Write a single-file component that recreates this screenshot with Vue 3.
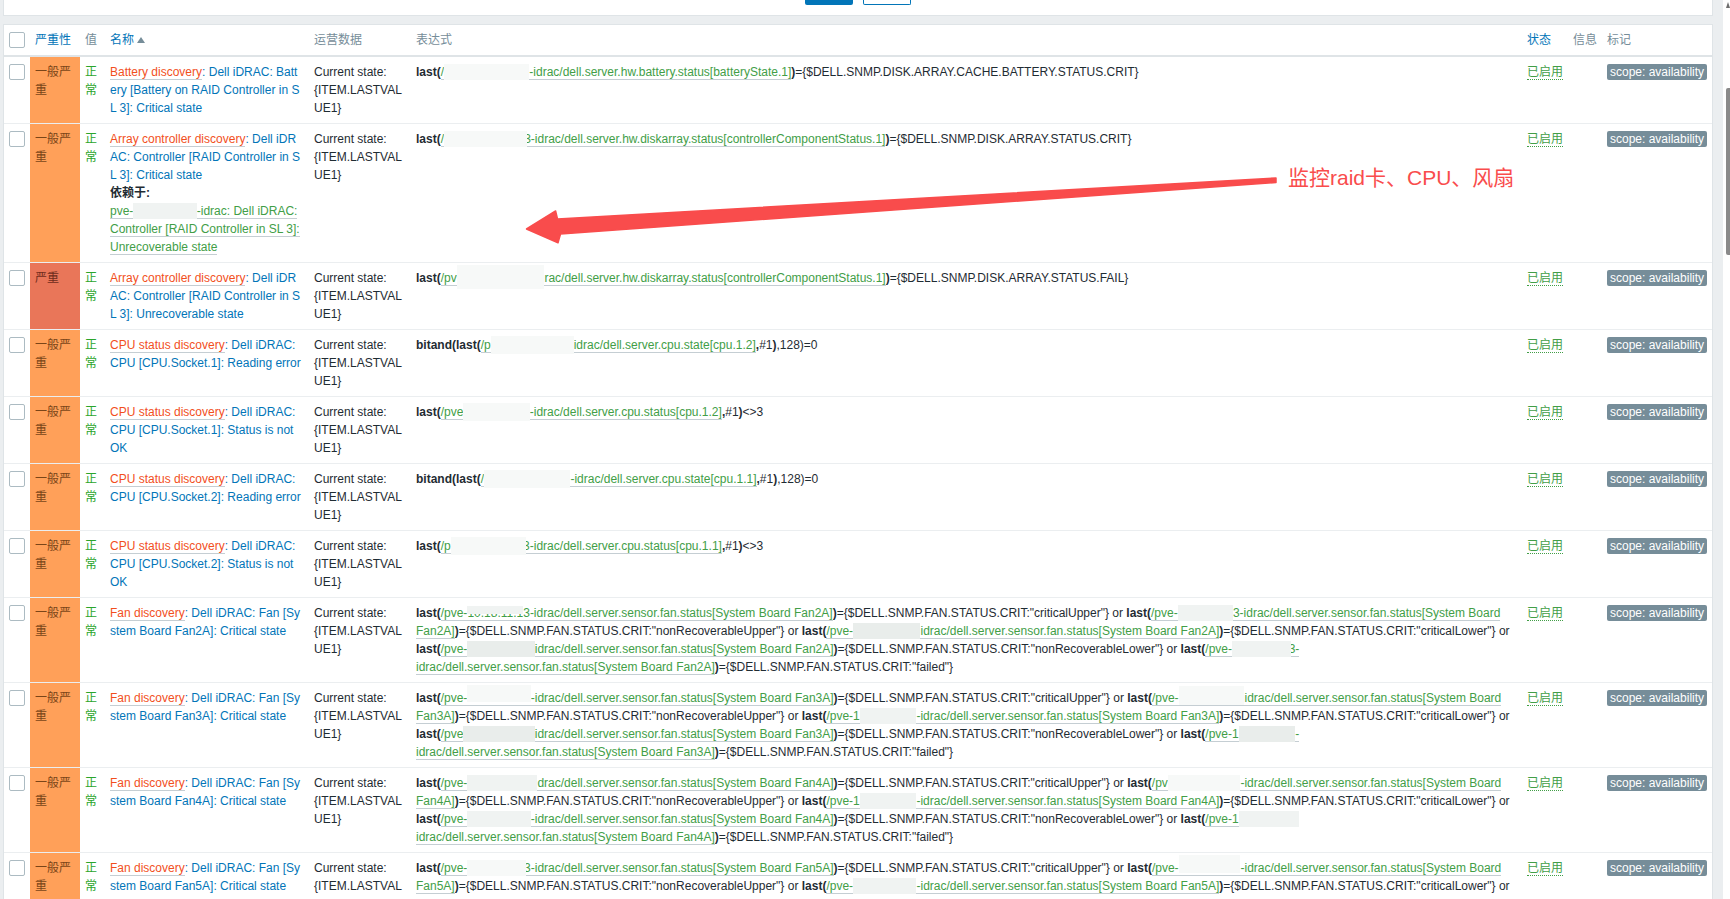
<script setup>
const LIGHT = '#f7f9f8'
const MID = '#f0f3f2'
const DARK = '#e9edeb'

const patch = (w, tone = MID, top = 1, h = 16, over = 0) => ({ w, tone, top, h, over })
const patchStyle = (p) => ({
  width: p.w + p.over + 'px',
  height: p.h + 'px',
  background: p.tone,
  marginTop: p.top + 'px',
  marginBottom: 18 - p.top - p.h + 'px',
  marginRight: -p.over + 'px'
})

const b = (t) => ({ k: 'b', t })
const t = (t) => ({ k: 't', t })
const link = (...parts) => ({ k: 'a', parts })

const simple = (open, host, key, tail) => [
  b(open),
  link(...host, key),
  ...tail
]

const ratioTail = (v) => [b(','), t('#1'), b(')'), t(v)]

const fanExpr = (n, hosts) => {
  const key = `/dell.server.sensor.fan.status[System Board Fan${n}A]`
  const crit = ['criticalUpper', 'nonRecoverableUpper', 'criticalLower', 'nonRecoverableLower', 'failed']
  const out = []
  hosts.forEach((h, i) => {
    out.push(b('last('), link(...h, key), b(')'), t(`={$DELL.SNMP.FAN.STATUS.CRIT:"${crit[i]}"}`))
    if (i < crit.length - 1) out.push(t(' or '))
  })
  return out
}

const fanName = (n) => ({
  lead: 'Fan discovery',
  rest: `: Dell iDRAC: Fan [System Board Fan${n}A]: Critical state`
})

const rows = [
  {
    sev: 'avg',
    lead: 'Battery discovery',
    rest: ': Dell iDRAC: Battery [Battery on RAID Controller in SL 3]: Critical state',
    expr: simple('last(', ['/', patch(85.3, LIGHT), '-idrac'], '/dell.server.hw.battery.status[batteryState.1]', [
      b(')'), t('={$DELL.SNMP.DISK.ARRAY.CACHE.BATTERY.STATUS.CRIT}')
    ])
  },
  {
    sev: 'avg',
    lead: 'Array controller discovery',
    rest: ': Dell iDRAC: Controller [RAID Controller in SL 3]: Critical state',
    dep: true,
    expr: simple('last(', ['/', patch(80.1, LIGHT, 1, 16, 2.4), '3-idrac'], '/dell.server.hw.diskarray.status[controllerComponentStatus.1]', [
      b(')'), t('={$DELL.SNMP.DISK.ARRAY.STATUS.CRIT}')
    ])
  },
  {
    sev: 'high',
    lead: 'Array controller discovery',
    rest: ': Dell iDRAC: Controller [RAID Controller in SL 3]: Unrecoverable state',
    expr: simple('last(', ['/pv', patch(87.7, LIGHT, -4, 24), 'rac'], '/dell.server.hw.diskarray.status[controllerComponentStatus.1]', [
      b(')'), t('={$DELL.SNMP.DISK.ARRAY.STATUS.FAIL}')
    ])
  },
  {
    sev: 'avg',
    lead: 'CPU status discovery',
    rest: ': Dell iDRAC: CPU [CPU.Socket.1]: Reading error',
    expr: simple('bitand(last(', ['/p', patch(83, LIGHT, 0, 18), 'idrac'], '/dell.server.cpu.state[cpu.1.2]', ratioTail(',128)=0'))
  },
  {
    sev: 'avg',
    lead: 'CPU status discovery',
    rest: ': Dell iDRAC: CPU [CPU.Socket.1]: Status is not OK',
    expr: simple('last(', ['/pve', patch(66.4, LIGHT, 0, 18), '-idrac'], '/dell.server.cpu.status[cpu.1.2]', [
      b(','), t('#1'), b(')'), t('<>3')
    ])
  },
  {
    sev: 'avg',
    lead: 'CPU status discovery',
    rest: ': Dell iDRAC: CPU [CPU.Socket.2]: Reading error',
    expr: simple('bitand(last(', ['/', patch(86.4, LIGHT, 0, 18), '-idrac'], '/dell.server.cpu.state[cpu.1.1]', ratioTail(',128)=0'))
  },
  {
    sev: 'avg',
    lead: 'CPU status discovery',
    rest: ': Dell iDRAC: CPU [CPU.Socket.2]: Status is not OK',
    expr: simple('last(', ['/p', patch(72.4, LIGHT, 0, 18, 2.4), '3-idrac'], '/dell.server.cpu.status[cpu.1.1]', [
      b(','), t('#1'), b(')'), t('<>3')
    ])
  },
  {
    sev: 'avg',
    ...fanName(2),
    expr: fanExpr(2, [
      ['/pve-', { half: '10.18.11.1' }, '3-idrac'],
      ['/pve-', patch(55.2, MID), '3-idrac'],
      ['/pve-', patch(67.4, DARK), 'idrac'],
      ['/pve-', patch(67.4, DARK), 'idrac'],
      ['/pve-', patch(56.7, MID, 1, 16, 2.4), '3-idrac']
    ])
  },
  {
    sev: 'avg',
    ...fanName(3),
    expr: fanExpr(3, [
      ['/pve-', patch(63.4, LIGHT, -4, 17), '-idrac'],
      ['/pve-', patch(65.9, LIGHT, -3, 19), 'idrac'],
      ['/pve-1', patch(56.7, MID), '-idrac'],
      ['/pve', patch(71.4, DARK), 'idrac'],
      ['/pve-1', patch(56.7, DARK), '-idrac']
    ])
  },
  {
    sev: 'avg',
    ...fanName(4),
    expr: fanExpr(4, [
      ['/pve-', patch(70, MID), 'drac'],
      ['/pv', patch(72.6, LIGHT), '-idrac'],
      ['/pve-1', patch(56.7, MID), '-idrac'],
      ['/pve-', patch(63.4, MID), '-idrac'],
      ['/pve-1', patch(60.7, MID), 'idrac']
    ])
  },
  {
    sev: 'avg',
    ...fanName(5),
    expr: fanExpr(5, [
      ['/pve-', patch(56.7, LIGHT, 1, 16, 2.4), '3-idrac'],
      ['/pve-', patch(61.9, LIGHT, -4, 18), '-idrac'],
      ['/pve-', patch(63.4, MID), '-idrac']
    ])
  }
]

const depPatch = patch(63.4, MID)
const sevLabel = { avg: '一般严重', high: '严重' }
</script>

<template>
  <div class="page">
    <main class="main">
      <div class="toolbar">
        <span class="btn btn-solid"></span>
        <span class="btn btn-line"></span>
      </div>
      <div class="card">
        <table class="list">
          <colgroup>
            <col class="c-check" />
            <col class="c-sev" />
            <col class="c-val" />
            <col class="c-name" />
            <col class="c-ops" />
            <col />
            <col class="c-state" />
            <col class="c-info" />
            <col class="c-tags" />
          </colgroup>
          <thead>
            <tr>
              <th class="check-cell"><span class="box"></span></th>
              <th class="sortable">严重性</th>
              <th>值</th>
              <th class="sortable">名称<span class="sort-up"></span></th>
              <th>运营数据</th>
              <th>表达式</th>
              <th class="sortable">状态</th>
              <th>信息</th>
              <th>标记</th>
            </tr>
          </thead>
          <tbody>
            <tr v-for="(row, i) in rows" :key="i">
              <td class="check-cell"><span class="box"></span></td>
              <td class="wrap" :class="row.sev">{{ sevLabel[row.sev] }}</td>
              <td class="wrap value">正常</td>
              <td class="wrap">
                <span class="name-lead">{{ row.lead }}</span><span class="name-rest">{{ row.rest }}</span>
                <template v-if="row.dep">
                  <div class="dep-title">依赖于:</div>
                  <div class="dep">
                    <span class="green-link">pve-<i class="patch" :style="patchStyle(depPatch)"></i>-idrac: Dell iDRAC: Controller [RAID Controller in SL 3]: Unrecoverable state</span>
                  </div>
                </template>
              </td>
              <td class="wrap">Current state:<br />{ITEM.LASTVALUE1}</td>
              <td class="expr">
                <template v-for="(node, n) in row.expr" :key="n">
                  <b v-if="node.k === 'b'">{{ node.t }}</b>
                  <span v-else-if="node.k === 't'">{{ node.t }}</span>
                  <span v-else class="green-link">
                    <template v-for="(part, m) in node.parts" :key="m">
                      <template v-if="typeof part === 'string'">{{ part }}</template>
                      <span v-else-if="part.half" class="half">{{ part.half }}</span>
                      <i v-else class="patch" :style="patchStyle(part)"></i>
                    </template>
                  </span>
                </template>
              </td>
              <td><span class="enabled">已启用</span></td>
              <td></td>
              <td><span class="tag">scope: availability</span></td>
            </tr>
          </tbody>
        </table>
      </div>
    </main>
    <aside class="scrollbar">
      <span class="scroll-up"></span>
      <span class="scroll-thumb"></span>
    </aside>

    <svg class="arrow" width="1730" height="899" viewBox="0 0 1730 899">
      <path d="M526.5 229 L555.6 211 L557.5 219 L1276 178 L1276 182.5 L560.5 234 L558 242.7 Z" fill="#f94c4c" stroke="#f94c4c" stroke-width="1.5" stroke-linejoin="round" />
    </svg>
    <div class="note">监控raid卡、CPU、风扇</div>
  </div>
</template>

<style>
html,
body {
  margin: 0;
  background: #ebeef0;
}
</style>

<style scoped>
.page {
  position: relative;
  display: flex;
  width: 1730px;
  height: 899px;
  overflow: hidden;
  background: #ebeef0;
  color: #1f2c33;
  font: 12px/18px "Liberation Sans", "Noto Sans CJK SC", sans-serif;
}
.main {
  flex: 1;
  min-width: 0;
  padding: 0 10px 0 3px;
}
.toolbar {
  display: flex;
  justify-content: center;
  gap: 10px;
  height: 15px;
  margin-bottom: 8px;
  background: #fff;
  border: 1px solid #dfe4e7;
  border-width: 0 1px 1px;
  box-sizing: content-box;
}
.btn {
  box-sizing: border-box;
  width: 48px;
  height: 5px;
  border-radius: 0 0 2px 2px;
}
.btn-solid {
  background: #0275b8;
}
.btn-line {
  background: #fff;
  border: 1px solid #0275b8;
  border-top: 0;
}
.card {
  background: #fff;
  border: 1px solid #dfe4e7;
  border-bottom: 0;
}
.list {
  table-layout: fixed;
  width: 1708px;
  border-collapse: separate;
  border-spacing: 0;
}
.c-check { width: 26px; }
.c-sev { width: 50px; }
.c-val { width: 25px; }
.c-name { width: 204px; }
.c-ops { width: 102px; }
.c-state { width: 46px; }
.c-info { width: 34px; }
.c-tags { width: 110px; }
th {
  height: 32px;
  padding: 0 5px;
  box-sizing: border-box;
  text-align: left;
  font-weight: 400;
  white-space: nowrap;
  color: #768d99;
  border-bottom: 2px solid #dfe4e7;
}
th.sortable {
  color: #0275b8;
}
td {
  padding: 6px 5px;
  vertical-align: top;
  border-bottom: 1px solid #ebeef0;
}
.check-cell {
  padding: 7px 5px 0;
  vertical-align: top;
}
.box {
  display: block;
  box-sizing: border-box;
  width: 16px;
  height: 16px;
  background: #fff;
  border: 1px solid #acbbc2;
  border-radius: 2px;
}
.sort-up {
  display: inline-block;
  margin-left: 3px;
  vertical-align: 1px;
  border-style: solid;
  border-width: 0 4px 6px;
  border-color: transparent transparent #768d99;
}
.wrap {
  word-break: break-all;
}
.avg {
  background: #ffa059;
  color: #7a4518;
}
.high {
  background: #e97659;
  color: #6f2c1c;
}
.value {
  color: #2ba52b;
}
.name-lead {
  color: #f24f1d;
  border-bottom: 1px solid #c5ced3;
}
.name-rest {
  color: #0275b8;
}
.dep-title {
  font-weight: 700;
}
.dep {
  word-break: normal;
}
.green-link {
  color: #429e47;
  border-bottom: 1px solid #c5ced3;
}
.patch {
  position: relative;
  z-index: 1;
  display: inline-block;
  vertical-align: top;
}
.half {
  position: relative;
}
.half::after {
  content: "";
  position: absolute;
  left: 0;
  right: 0;
  top: 0;
  height: 7.5px;
  background: #f0f3f2;
}
.expr b {
  font-weight: 700;
}
.enabled {
  color: #429e47;
  border-bottom: 1px dotted #429e47;
}
.tag {
  display: block;
  box-sizing: border-box;
  width: 100px;
  height: 16px;
  margin-top: 1px;
  padding: 0 3px;
  overflow: hidden;
  white-space: nowrap;
  line-height: 16px;
  color: #fff;
  background: #768d99;
  border-radius: 2px;
}
.scrollbar {
  display: flex;
  flex-direction: column;
  align-items: flex-end;
  width: 7px;
  background: #fff;
}
.scroll-up {
  margin-top: 2px;
  border-style: solid;
  border-width: 0 2px 6px;
  border-color: transparent transparent #6e6e6e;
}
.scroll-thumb {
  width: 4px;
  height: 167px;
  margin-top: 80px;
  background: #8a8a8a;
  border-radius: 2px 0 0 2px;
}
.arrow {
  position: absolute;
  left: 0;
  top: 0;
  z-index: 2;
  pointer-events: none;
}
.note {
  position: absolute;
  left: 1288px;
  top: 164px;
  z-index: 2;
  font-size: 21px;
  line-height: 28px;
  white-space: nowrap;
  color: #f94c4c;
}
</style>
